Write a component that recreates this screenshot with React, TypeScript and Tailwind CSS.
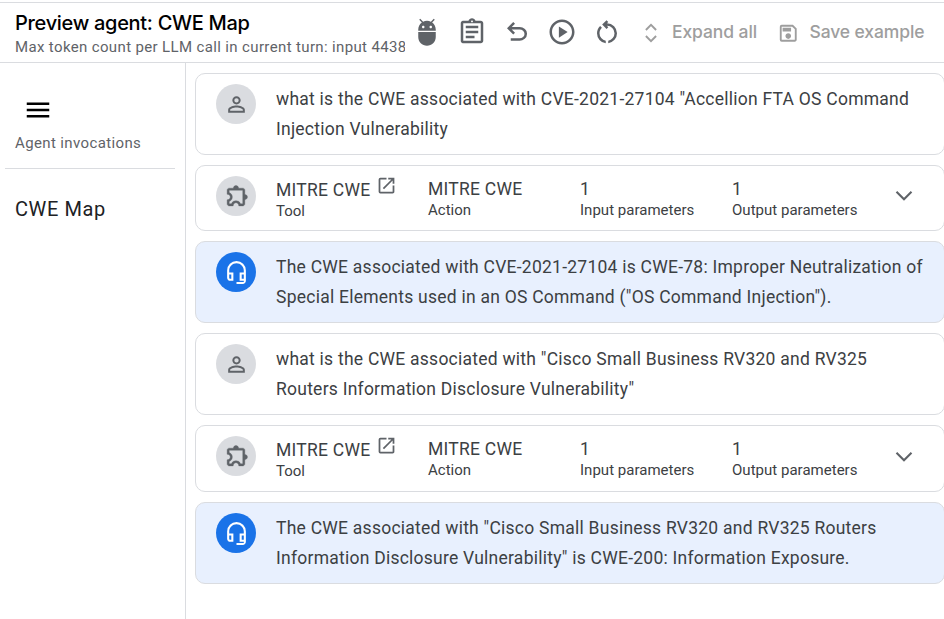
import type { ReactNode } from "react";
import {
  MdAdb,
  MdMenu,
  MdOpenInNew,
  MdOutlineAssignment,
  MdOutlineHeadsetMic,
  MdOutlinePlayCircle,
  MdOutlineSave,
  MdPersonOutline,
} from "react-icons/md";

function UndoIcon() {
  return (
    <svg viewBox="0 -960 960 960" className="size-[30px]" fill="currentColor">
      <path d="M280-200v-80h284q63 0 109.5-40T720-420q0-60-46.5-100T564-560H312l104 104-56 56-200-200 200-200 56 56-104 104h252q97 0 169.5 63T800-420q0 94-72.5 157T564-200H280Z" />
    </svg>
  );
}

function RestartIcon() {
  return (
    <svg viewBox="0 -960 960 960" className="size-[30px]" fill="currentColor">
      <path d="M440-122q-121-15-200.5-105.5T160-440q0-66 26-126.5T260-672l57 57q-38 34-57.5 79T240-440q0 88 56 155.5T440-202v80Zm80 0v-80q87-16 143.5-83T720-440q0-100-70-170t-170-70h-3l44 44-56 56-140-140 140-140 56 56-44 44h3q134 0 227 93t93 227q0 121-79.5 211.5T520-122Z" />
    </svg>
  );
}

function ExtensionIcon() {
  return (
    <svg viewBox="0 -960 960 960" className="size-[25px]" fill="currentColor" stroke="currentColor" strokeWidth="14">
      <path d="M352-120H200q-33 0-56.5-23.5T120-200v-152q48 0 84-30.5t36-77.5q0-47-36-77.5T120-568v-152q0-33 23.5-56.5T200-800h160q0-42 29-71t71-29q42 0 71 29t29 71h160q33 0 56.5 23.5T800-720v160q42 0 71 29t29 71q0 42-29 71t-71 29v160q0 33-23.5 56.5T720-120H568q0-50-31.5-85T460-240q-45 0-76.5 35T352-120Zm-152-80h85q24-66 77-93t98-27q45 0 98 27t77 93h85v-520H200v88q54 20 87 67t33 105q0 57-33 104t-87 68v88Z" />
    </svg>
  );
}

function UnfoldIcon() {
  return (
    <svg viewBox="0 0 12 20" className="h-5 w-3 shrink-0" fill="none" stroke="currentColor" strokeWidth="1.9">
      <path d="M.9 7 6 1.9 11.1 7M.9 13 6 18.1l5.1-5.1" />
    </svg>
  );
}

function Header() {
  return (
    <header className="mt-[2px] flex h-[61px] shrink-0 border-y border-[#dadce0] pl-[15px]">
      <div className="w-[390px] shrink-0 overflow-hidden whitespace-nowrap pt-[5px]">
        <h1 className="font-['Inter'] text-[20px] leading-[30px] font-medium tracking-[-0.3px] text-black">
          Preview agent: CWE Map
        </h1>
        <p className="text-[15px] leading-[18px] tracking-[0.36px] text-[#5f6368]">
          Max token count per LLM call in current turn: input 4438
        </p>
      </div>
      <div className="ml-[7px] flex h-[58px] items-center gap-[15px] text-[#5f6368]">
        <MdAdb size={30} />
        <MdOutlineAssignment size={30} />
        <UndoIcon />
        <MdOutlinePlayCircle size={30} />
        <RestartIcon />
      </div>
      <div className="ml-[23px] flex h-[60px] items-center font-['Inter'] text-[17.5px] font-medium whitespace-nowrap text-[#9e9e9e]">
        <UnfoldIcon />
        <span className="ml-[15px] w-[105px] pb-[2px] tracking-[-0.1px]">Expand all</span>
        <MdOutlineSave size={22.5} className="shrink-0" />
        <span className="ml-[10px] pb-[2px] tracking-[-0.12px]">Save example</span>
      </div>
    </header>
  );
}

function Sidebar() {
  return (
    <aside className="w-[186px] shrink-0 border-r border-[#dadce0] px-[5px] pr-[10px]">
      <div className="h-[106px] border-b border-[#dadce0] pt-8 pl-[10px]">
        <MdMenu size={30} className="ml-[8px] text-black" />
        <p className="mt-[9px] text-[15px] leading-[18px] tracking-[0.375px] whitespace-nowrap text-[#5f6368]">
          Agent invocations
        </p>
      </div>
      <p className="mt-[25px] pl-[10px] text-[20px] leading-[30px] tracking-[0.6px] text-[#202124]">CWE Map</p>
    </aside>
  );
}

function Avatar({ agent = false, children }: { agent?: boolean; children: ReactNode }) {
  return (
    <div
      className={`flex size-10 shrink-0 items-center justify-center rounded-full ${
        agent ? "bg-[#1a73e8] text-white" : "bg-[#dadce0] text-[#5f6368]"
      }`}
    >
      {children}
    </div>
  );
}

function Message({ agent = false, lines }: { agent?: boolean; lines: string[] }) {
  return (
    <section
      className={`flex h-[82px] shrink-0 rounded-[10px] border border-[#dadce0] pt-[10px] pl-5 ${
        agent ? "bg-[#e8f0fe]" : "bg-white"
      }`}
    >
      <Avatar agent={agent}>{agent ? <MdOutlineHeadsetMic size={25} /> : <MdPersonOutline size={25} />}</Avatar>
      <div className="ml-5 text-[17.5px] leading-[30px] tracking-[0.243px] whitespace-nowrap text-[#3c4043]">
        {lines.map((line) => (
          <p key={line}>{line}</p>
        ))}
      </div>
    </section>
  );
}

function Field({ value, label }: { value: string; label: string }) {
  return (
    <div className="w-[152px] shrink-0 whitespace-nowrap">
      <p className="pt-[1px] text-[17.5px] leading-[25px] tracking-[0.25px]">{value}</p>
      <p className="-mt-[1px] text-[15px] leading-[18px] tracking-[0.02px]">{label}</p>
    </div>
  );
}

function ToolCall({ height, chevronOffset }: { height: string; chevronOffset: string }) {
  return (
    <section
      className={`flex shrink-0 rounded-[10px] border border-[#dadce0] bg-white pt-[10px] pl-5 text-[#3c4043] ${height}`}
    >
      <Avatar>
        <ExtensionIcon />
      </Avatar>
      <div className="ml-5 w-[152px] shrink-0 pt-[1px]">
        <div className="flex h-[25px]">
          <p className="pt-[1px] text-[17.5px] leading-[25px] tracking-[0.25px]">MITRE CWE</p>
          <MdOpenInNew size={21} className="-mt-[2px] ml-[6px] text-[#5f6368]" />
        </div>
        <p className="text-[15px] leading-[18px]">Tool</p>
      </div>
      <Field value="MITRE CWE" label="Action" />
      <Field value="1" label="Input parameters" />
      <Field value="1" label="Output parameters" />
      <svg
        viewBox="0 0 18 12"
        className={`ml-[11px] h-3 w-[18px] ${chevronOffset}`}
        fill="none"
        stroke="#5f6368"
        strokeWidth="2.1"
      >
        <path d="M1.5 1.8 9 9.3l7.5-7.5" />
      </svg>
    </section>
  );
}

export default function App() {
  return (
    <div className="flex h-[619px] w-[944px] flex-col overflow-hidden bg-white font-['Roboto',sans-serif]">
      <Header />
      <div className="flex min-h-0 flex-1">
        <Sidebar />
        <main className="-mr-[1px] flex min-w-0 flex-1 flex-col gap-[10px] pt-[10px] pl-[9px]">
          <Message
            lines={[
              'what is the CWE associated with CVE-2021-27104 "Accellion FTA OS Command',
              "Injection Vulnerability",
            ]}
          />
          <ToolCall height="h-[66px]" chevronOffset="mt-[14px]" />
          <Message
            agent
            lines={[
              "The CWE associated with CVE-2021-27104 is CWE-78: Improper Neutralization of",
              'Special Elements used in an OS Command ("OS Command Injection").',
            ]}
          />
          <Message
            lines={[
              'what is the CWE associated with "Cisco Small Business RV320 and RV325',
              'Routers Information Disclosure Vulnerability"',
            ]}
          />
          <ToolCall height="h-[67px]" chevronOffset="mt-[15px]" />
          <Message
            agent
            lines={[
              'The CWE associated with "Cisco Small Business RV320 and RV325 Routers',
              'Information Disclosure Vulnerability" is CWE-200: Information Exposure.',
            ]}
          />
        </main>
      </div>
    </div>
  );
}
